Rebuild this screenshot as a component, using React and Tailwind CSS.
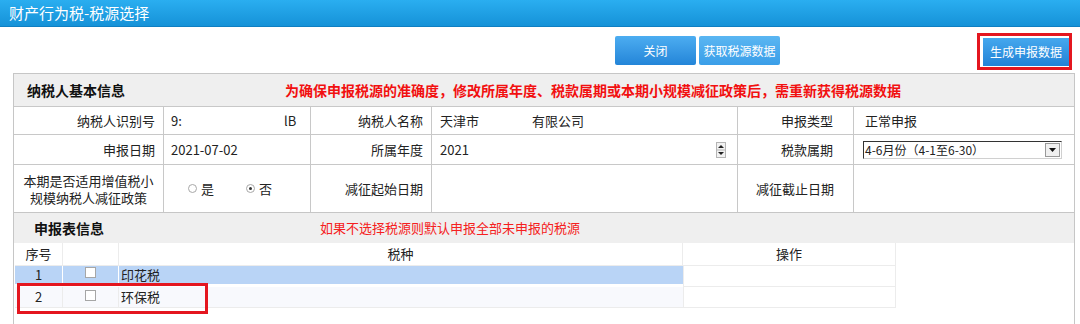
import React from "react";

// ─── 财产行为税 - 税源选择 ───────────────────────────────────────────────
const cjk = "font-['Noto_Sans_CJK_SC','Liberation_Sans',sans-serif]";

const BlueBtn = ({ children, light }) => (
  <button
    className={`h-[29px] w-[81px] rounded-[2px] text-[12px] text-white ${cjk} ${
      light
        ? "bg-linear-to-b from-[#5ab6f2] to-[#3a9ee8]"
        : "bg-linear-to-b from-[#4cadf1] to-[#2385d8]"
    }`}
  >
    {children}
  </button>
);

const Radio = ({ checked }) => (
  <span className="inline-flex h-[9px] w-[9px] items-center justify-center rounded-full border border-[#a8a8a8] bg-white">
    {checked && <span className="h-[3px] w-[3px] rounded-full bg-[#333]" />}
  </span>
);

const Check = () => <span className="mt-[1px] h-[11px] w-[11px] border border-[#a6a6a6] bg-white" />;

const Spinner = () => (
  <svg width="10" height="16" viewBox="0 0 10 16" className="shrink-0">
    <rect x="0.5" y="0.5" width="9" height="15" fill="#f2f2f2" stroke="#b5b5b5" />
    <line x1="1" y1="8" x2="9" y2="8" stroke="#b5b5b5" />
    <path d="M5 3 L8 6 L2 6 Z" fill="#222" />
    <path d="M2 10 L8 10 L5 13 Z" fill="#222" />
  </svg>
);

export default function App() {
  const label = `flex items-center justify-end border-r border-[#c8c8c8] text-[13px] text-[#222] ${cjk}`;
  const value = `flex items-center border-r border-[#c8c8c8] text-[13px] text-[#222] ${cjk}`;

  return (
    <div className={`relative h-[324px] w-[1080px] overflow-hidden bg-white ${cjk}`}>
      {/* title bar */}
      <div className="h-[27px] border-b border-[#0f7fc2] bg-linear-to-b from-[#2aaef0] to-[#1592d8] pl-[9px] text-[15px] leading-[25px] text-white">
        财产行为税-税源选择
      </div>

      {/* toolbar */}
      <div className="flex h-[46px] items-start pl-[615px] pr-[8px]">
        <div className="mt-[9px] flex gap-[3px]">
          <BlueBtn>关闭</BlueBtn>
          <BlueBtn light>获取税源数据</BlueBtn>
        </div>
        <div className="ml-auto mt-[6px] border-[3px] border-[#e4161f] bg-white pb-[1px] pl-[3px] pt-[2px]">
          <button className="block h-[28px] w-[86px] bg-linear-to-b from-[#45a8ee] to-[#2282d6] text-[12px] text-white">
            生成申报数据
          </button>
        </div>
      </div>

      {/* 纳税人基本信息 */}
      <div className="ml-[13px] w-[1062px] border border-[#c6c6c6]">
        <div className="flex h-[32px] items-center bg-[#efefef] pl-[13px]">
          <span className="w-[258px] text-[14px] font-bold text-[#111]">纳税人基本信息</span>
          <span className="text-[14px] font-bold text-[#f21010]">
            为确保申报税源的准确度，修改所属年度、税款属期或本期小规模减征政策后，需重新获得税源数据
          </span>
        </div>

        <div className="grid grid-cols-[150px_147px_121px_306px_116px_1fr] grid-rows-[28px_30px_48px]">
          {/* row 1 */}
          <div className={`${label} border-t pr-[8px]`}>纳税人识别号</div>
          <div className={`${value} border-t pl-[7px]`}>
            <span className="w-[113px]">9:</span>
            <span>lB</span>
          </div>
          <div className={`${label} border-t pr-[8px]`}>纳税人名称</div>
          <div className={`${value} border-t pl-[8px]`}>
            <span className="w-[92px]">天津市</span>
            <span>有限公司</span>
          </div>
          <div className={`${label} border-t pr-[20px]`}>申报类型</div>
          <div className={`${value} border-r-0 border-t pl-[11px]`}>正常申报</div>

          {/* row 2 */}
          <div className={`${label} border-t pr-[8px]`}>申报日期</div>
          <div className={`${value} border-t pl-[7px] font-['Liberation_Mono',monospace] text-[12px]`}>2021-07-02</div>
          <div className={`${label} border-t pr-[8px]`}>所属年度</div>
          <div className={`${value} border-t justify-between pl-[8px] pr-[11px] text-[12px]`}>
            <span>2021</span>
            <Spinner />
          </div>
          <div className={`${label} border-t pr-[20px]`}>税款属期</div>
          <div className={`${value} border-r-0 border-t pl-[9px]`}>
            <div className="flex h-[18px] w-[199px] items-center border border-[#333] border-b-[#d0d0d0] border-r-[#d0d0d0] bg-white">
              <span className="flex-1 pl-[1px] text-[12px] leading-[16px]">4-6月份（4-1至6-30）</span>
              <span className="mr-[1px] flex h-[14px] w-[15px] items-center justify-center border border-[#999] bg-[#f0f0f0]">
                <svg width="7" height="4" viewBox="0 0 7 4">
                  <path d="M0 0 L7 0 L3.5 4 Z" fill="#111" />
                </svg>
              </span>
            </div>
          </div>

          {/* row 3 */}
          <div className={`${value} border-t flex-col justify-center text-center`}>
            <div className="leading-[19px]">本期是否适用增值税小</div>
            <div className="-mt-[2px] leading-[19px]">规模纳税人减征政策</div>
          </div>
          <div className={`${value} border-t gap-[4px] pl-[24px]`}>
            <Radio />
            <span className="w-[41px]">是</span>
            <Radio checked />
            <span>否</span>
          </div>
          <div className={`${label} border-t pr-[8px]`}>减征起始日期</div>
          <div className={`${value} border-t`} />
          <div className={`${label} border-t pr-[19px]`}>减征截止日期</div>
          <div className={`${value} border-r-0 border-t`} />
        </div>
      </div>

      {/* 申报表信息 */}
      <div className="ml-[13px] h-[120px] w-[1062px] border-x border-[#c6c6c6]">
        <div className="flex h-[30px] items-center bg-[#efefef] pl-[20px]">
          <span className="w-[286px] text-[14px] font-bold text-[#111]">申报表信息</span>
          <span className="text-[13px] text-[#f52020]">如果不选择税源则默认申报全部未申报的税源</span>
        </div>

        <div className="grid grid-cols-[48px_56px_564px_213px] grid-rows-[23px_21px_21px] pl-[1px] text-[13px] text-[#222]">
          {/* header */}
          <div className="flex items-center justify-center border-b border-r border-[#ececec]">序号</div>
          <div className="border-b border-r border-[#ececec]" />
          <div className="flex items-center justify-center border-b border-r border-[#ececec]">税种</div>
          <div className="flex items-center justify-center border-b border-r border-[#ececec]">操作</div>

          {/* row 1 */}
          <div className="flex items-center justify-center border-b-[3px] border-r border-b-white border-r-white bg-[#b9d4f6]">1</div>
          <div className="flex justify-center border-b-[3px] border-r border-b-white border-r-white bg-[#b9d4f6]">
            <Check />
          </div>
          <div className="flex items-center border-b-[3px] border-b-white bg-[#b9d4f6] pl-[2px]">印花税</div>
          <div className="border-b border-l border-r border-[#ececec]" />

          {/* row 2 */}
          <div className="flex items-center justify-center border-b border-r border-[#ececec] bg-[#f8f9fd]">2</div>
          <div className="flex justify-center border-b border-r border-[#ececec] bg-[#f8f9fd] pt-[2px]">
            <Check />
          </div>
          <div className="flex items-center border-b border-[#ececec] bg-[#f8f9fd] pl-[2px]">环保税</div>
          <div className="border-b border-l border-r border-[#ececec]" />
        </div>
      </div>

      {/* red annotation around row 2 */}
      <div className="absolute left-[17px] top-[283px] h-[31px] w-[191px] border-[3px] border-[#e4161f]" />
    </div>
  );
}
